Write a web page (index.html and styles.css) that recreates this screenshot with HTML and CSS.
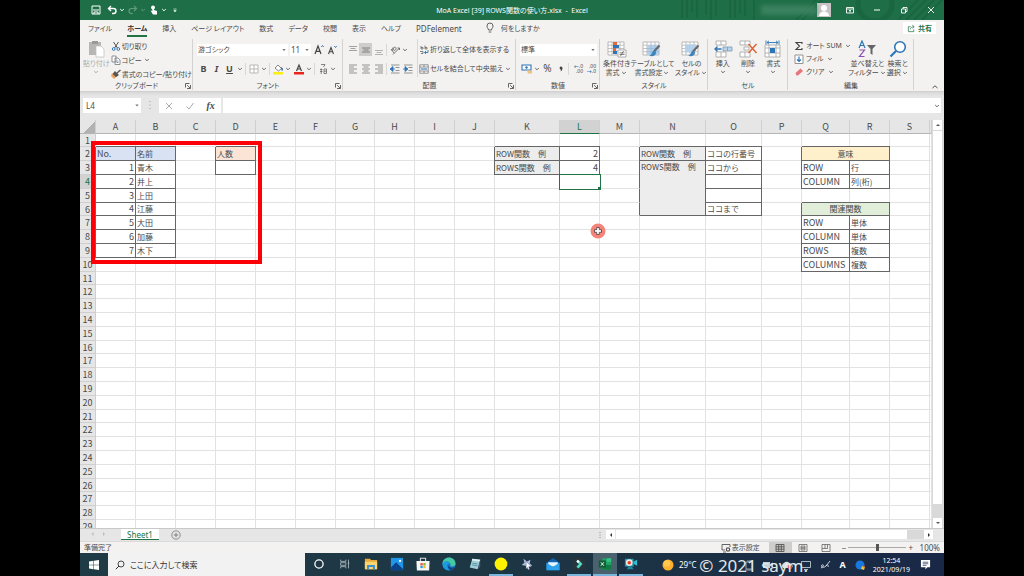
FILE: index.html
```html
<!DOCTYPE html>
<html lang="ja">
<head>
<meta charset="utf-8">
<title>MoA Excel [39] ROWS関数の使い方.xlsx - Excel</title>
<link rel="stylesheet" href="styles.css">
</head>
<body>
<svg class="defs" aria-hidden="true">
  <symbol id="chev" viewBox="0 0 8 8"><path d="M2.2 3l1.8 1.8L5.8 3" fill="none" stroke="#666" stroke-width="1"/></symbol>
  <symbol id="tri" viewBox="0 0 8 8"><path d="M2.3 3h3.4L4 5z" fill="#777"/></symbol>
  <symbol id="launch" viewBox="0 0 8 8"><path d="M1.5 5.5v-4h4M3.2 3.2l3 3M6.5 3v3.5H3" fill="none" stroke="#555" stroke-width=".9"/></symbol>
  <symbol id="table" viewBox="0 0 20 18"><path d="M1 2h16v13H1z" fill="#fff" stroke="#aaa" stroke-width=".8"/><path d="M1 5.200h16M1 8.500h16M1 11.700h16M5 2v13M9 2v13M13 2v13" stroke="#aaa" stroke-width=".7"/></symbol>
  <symbol id="brush" viewBox="0 0 20 18"><path d="M17.500 5.500l-5.500 6" stroke="#666" stroke-width="2"/><path d="M12.500 10.500c-3 0-1.500 4-5.500 5.200 3.500 1.300 7 0 7-3.500z" fill="#3d83bd"/></symbol>
</svg>
<main class="window">
  <header class="titlebar">
    <svg class="pattern" viewBox="0 0 264 20" aria-hidden="true"><g fill="none" stroke="#1a6542" stroke-width="2"><path d="M2 0v18M7 0v18M12 0v12M17 0v18M26 0v15M31 0v20M36 0v16M50 0v18M55 0v18M60 0v13M65 0v16M74 0v20"/><circle cx="195" cy="4" r="17" stroke-width="5"/><path d="M116 20l20-20M122 20l20-20M218 20l20-20M226 20l20-20M234 20l20-20M242 20l20-20"/></g></svg>
    <div class="quick">
      <button aria-label="上書き保存"><svg viewBox="0 0 10 10"><path d="M1 1h8v8H1z" fill="none" stroke="#fff"/><path d="M2 5h6M3 9V7h4v2" stroke="#fff" fill="none"/></svg></button>
      <button class="withchev" aria-label="元に戻す"><svg viewBox="0 0 10 10"><path d="M4 1L1.500 3.500 4 6M2 3.500h4.500a2.500 2.500 0 010 5H5" fill="none" stroke="#fff" stroke-width="1.400"/></svg><svg class="chev light"><use href="#chev"/></svg></button>
      <button class="withchev dim" aria-label="やり直し"><svg viewBox="0 0 10 10"><path d="M6 1l2.500 2.500L6 6M8 3.500H3.500a2.500 2.500 0 000 5H5" fill="none" stroke="#fff" stroke-width="1.200"/></svg><svg class="chev light"><use href="#chev"/></svg></button>
      <button class="withchev" aria-label="タッチ/マウス モード"><svg viewBox="0 0 10 10"><circle cx="4" cy="2.500" r="2" fill="#fff"/><path d="M3.300 2v4L1.500 5.500 4 9.500h4V6L5 5V2z" fill="#fff"/></svg><svg class="chev light"><use href="#chev"/></svg></button>
      <button aria-label="クイック アクセスのカスタマイズ"><svg viewBox="0 0 10 10"><path d="M3.500 4h3M3.800 5.500h2.400L5 7z" stroke="#dfeee6" stroke-width=".7" fill="#dfeee6"/></svg></button>
    </div>
    <h1 class="title">MoA Excel [39] ROWS関数の使い方.xlsx&nbsp; -&nbsp; Excel</h1>
    <div class="account">
      <span class="username"></span>
      <svg class="avatar" viewBox="0 0 14 14"><path d="M0 0h14v14H0z" fill="#c9c5c7"/><circle cx="7" cy="5" r="3" fill="#fff"/><path d="M2 13c0-6 10-6 10 0z" fill="#fff"/></svg>
      <button class="winbtn" aria-label="リボンの表示オプション"><svg viewBox="0 0 10 10"><path d="M1.500 2.500h7v5.500h-7zM1.500 4h7M5 7.500V5M4 6l1-1 1 1" fill="none" stroke="#fff" stroke-width=".9"/></svg></button>
      <button class="winbtn" aria-label="最小化"><svg viewBox="0 0 10 10"><path d="M2 5h6" stroke="#fff"/></svg></button>
      <button class="winbtn" aria-label="元に戻す (縮小)"><svg viewBox="0 0 10 10"><path d="M2.500 4h4v4h-4zM4 4V2.500h4V6.500H6.500" fill="none" stroke="#fff" stroke-width=".9"/></svg></button>
      <button class="winbtn" aria-label="閉じる"><svg viewBox="0 0 10 10"><path d="M2 2l6 6M8 2L2 8" stroke="#fff" stroke-width=".9"/></svg></button>
    </div>
  </header>

  <nav class="tabs">
    <button>ファイル</button><button class="active">ホーム</button><button>挿入</button><button>ページ レイアウト</button><button>数式</button><button>データ</button><button>校閲</button><button>表示</button><button>ヘルプ</button><button class="latin">PDFelement</button>
    <button class="tellme"><svg viewBox="0 0 10 12"><path d="M3.500 8C3.500 6.500 2 6 2 4a3 3 0 016 0c0 2-1.500 2.500-1.500 4zM3.700 10h2.600" fill="none" stroke="#555" stroke-width=".9"/></svg>何をしますか</button>
    <button class="share"><svg viewBox="0 0 10 10"><path d="M4 3H1.500v5.500h6V6M3.500 6c.5-2 2-3 4-3M6 1.300L8 3 6 4.700" fill="none" stroke="#217346" stroke-width=".8"/></svg>共有</button>
  </nav>

  <section class="ribbon">
    <div class="group">
      <div class="body clip">
        <button class="big paste"><svg viewBox="0 0 20 18"><path d="M3 2h12v13H3z" fill="#b9b5b7"/><path d="M6 1h6v3H6z" fill="#999"/><path d="M10 6h5l3 3v8h-8z" fill="#fff" stroke="#bbb" stroke-width=".7"/></svg><span>貼り付け</span><svg class="chev"><use href="#chev"/></svg></button>
        <div class="stack">
          <button class="row"><svg viewBox="0 0 10 10"><path d="M2.500 1l4 6M7.500 1l-4 6" stroke="#555" stroke-width="1"/><circle cx="2.700" cy="8" r="1.400" fill="none" stroke="#3477b8"/><circle cx="7.300" cy="8" r="1.400" fill="none" stroke="#3477b8"/></svg>切り取り</button>
          <button class="row"><svg viewBox="0 0 10 10"><path d="M1 1h4v6H1zM4 3h3l2 2v4.500H4z" fill="#fff" stroke="#777" stroke-width=".8"/><path d="M5.500 6h2M5.500 7.500h2" stroke="#3477b8" stroke-width=".7"/></svg>コピー<svg class="chev"><use href="#chev"/></svg></button>
          <button class="row"><svg viewBox="0 0 10 10"><path d="M1 4l4 4-2 2-3-3z" fill="#eaa25a"/><path d="M4 3l3 3-2 1.500L2.500 5zM6 4l3.500-3" stroke="#555" stroke-width="1.300" fill="#555"/></svg>書式のコピー/貼り付け</button>
        </div>
      </div>
      <div class="label">クリップボード<svg class="launch"><use href="#launch"/></svg></div>
    </div>

    <div class="group">
      <div class="body lines">
        <div class="line">
          <label class="combo name"><select aria-label="フォント"><option>游ゴシック</option></select><svg class="chev"><use href="#tri"/></svg></label>
          <label class="combo size"><select aria-label="フォント サイズ"><option>11</option></select><svg class="chev"><use href="#tri"/></svg></label>
          <button class="ib" aria-label="フォント サイズの拡大"><svg viewBox="0 0 12 12"><path d="M2 10l3-8 3 8M3 7.300h4" fill="none" stroke="#444" stroke-width="1.200"/><path d="M8.300 3L9.500 1.500 10.700 3" fill="none" stroke="#3477b8"/></svg></button>
          <button class="ib" aria-label="フォント サイズの縮小"><svg viewBox="0 0 12 12"><path d="M2.500 10L5 3.500 7.500 10M3.500 7.800h3" fill="none" stroke="#444" stroke-width="1.100"/><path d="M8.300 2l1.200 1.500L10.700 2" fill="none" stroke="#3477b8"/></svg></button>
        </div>
        <div class="line">
          <button class="ib b">B</button><button class="ib i">I</button><button class="ib u">U</button><svg class="chev"><use href="#chev"/></svg><i class="sep"></i>
          <button class="ib" aria-label="罫線"><svg viewBox="0 0 12 12"><path d="M2 2h8v8H2zM6 2v8M2 6h8" fill="#fff" stroke="#aaa" stroke-width=".8"/></svg></button><svg class="chev"><use href="#chev"/></svg><i class="sep"></i>
          <button class="ib" aria-label="塗りつぶしの色"><svg viewBox="0 0 12 12"><path d="M3 5l3-3 3.500 3.500L6.500 8z" fill="#fff" stroke="#777" stroke-width=".9"/><path d="M9.500 4.500c1.500 1 1 3 .5 3z" fill="#3477b8" stroke="#3477b8"/><path d="M1 9h10v2.500H1z" fill="#fbee12"/></svg></button><svg class="chev"><use href="#chev"/></svg>
          <button class="ib" aria-label="フォントの色"><svg viewBox="0 0 12 12"><path d="M3.500 8L6 2l2.500 6M4.300 6h3.400" fill="none" stroke="#444" stroke-width="1.200"/><path d="M1 9h10v2.500H1z" fill="#e8271c"/></svg></button><svg class="chev"><use href="#chev"/></svg><i class="sep"></i>
          <button class="ib" aria-label="ふりがなの表示"><svg viewBox="0 0 12 12"><path d="M4 1.500h4L6.500 4M3 6.500h2.500M4.200 5.500V11M3 8.500h2.500M7 6h2.500v4.500H7zM7 8.200h2.500" fill="none" stroke="#666" stroke-width=".8"/></svg></button><svg class="chev"><use href="#chev"/></svg>
        </div>
      </div>
      <div class="label">フォント<svg class="launch"><use href="#launch"/></svg></div>
    </div>

    <div class="group">
      <div class="body align">
        <div class="lines">
          <div class="line">
            <button class="ib" aria-label="上揃え"><svg viewBox="0 0 12 12"><path d="M2 2.500h8M3.500 4.500h5M2 6.500h8" stroke="#999" stroke-width=".9"/></svg></button>
            <button class="ib on" aria-label="上下中央揃え"><svg viewBox="0 0 12 12"><path d="M2 4h8M3.500 6h5M2 8h8" stroke="#777" stroke-width=".9"/></svg></button>
            <button class="ib" aria-label="下揃え"><svg viewBox="0 0 12 12"><path d="M2 6.500h8M3.500 8.500h5M2 10.500h8" stroke="#aaa" stroke-width=".9"/></svg></button><i class="sep"></i>
            <button class="ib" aria-label="方向"><svg viewBox="0 0 12 12"><path d="M2 5l3 4M4 3.500c-1 3 3 4 3 1S3 4 3 7M4 10.500L10.500 4M8.500 4h2v2" fill="none" stroke="#666" stroke-width=".9"/></svg></button><svg class="chev"><use href="#chev"/></svg>
          </div>
          <div class="line">
            <button class="ib" aria-label="左揃え"><svg viewBox="0 0 12 12"><path d="M2 2h8M2 4h5M2 6h8M2 8h5M2 10h8" stroke="#888" stroke-width=".9"/></svg></button>
            <button class="ib" aria-label="中央揃え"><svg viewBox="0 0 12 12"><path d="M2 2h8M3.500 4h5M2 6h8M3.500 8h5M2 10h8" stroke="#888" stroke-width=".9"/></svg></button>
            <button class="ib" aria-label="右揃え"><svg viewBox="0 0 12 12"><path d="M2 2h8M5 4h5M2 6h8M5 8h5M2 10h8" stroke="#888" stroke-width=".9"/></svg></button><i class="sep"></i>
            <button class="ib" aria-label="インデントを減らす"><svg viewBox="0 0 12 12"><path d="M2 2h8.500M6.500 4.500h4M6.500 7.500h4M2 10h8.500" stroke="#888" stroke-width=".9"/><path d="M4 3.500L1 6l3 2.500zM3 6h3" fill="#2e75b6" stroke="#2e75b6" stroke-width=".8"/></svg></button>
            <button class="ib" aria-label="インデントを増やす"><svg viewBox="0 0 12 12"><path d="M2 2h8.500M6.500 4.500h4M6.500 7.500h4M2 10h8.500" stroke="#888" stroke-width=".9"/><path d="M3 3.500L6 6 3 8.500zM1 6h3" fill="#2e75b6" stroke="#2e75b6" stroke-width=".8"/></svg></button>
          </div>
        </div>
        <i class="sep tall"></i>
        <div class="lines">
          <button class="line txt"><svg viewBox="0 0 10 10"><path d="M2 1v3h2V2.500H2M6 .5V4h2V2.500H6M1 6.500h3v2H2" fill="none" stroke="#666" stroke-width=".8"/><path d="M9 5v2.500H5.500M7 6L5.500 7.500 7 9" fill="none" stroke="#2e75b6" stroke-width=".9"/></svg>折り返して全体を表示する</button>
          <button class="line txt"><svg viewBox="0 0 10 10"><path d="M.8.8h8.400v8.400H.8zM.8 3h8.400M.8 7h8.400M5 .8V3M5 7v2" fill="#fff" stroke="#777" stroke-width=".8"/><path d="M2 5h6" stroke="#2e75b6" stroke-width="1.100"/></svg>セルを結合して中央揃え<svg class="chev"><use href="#chev"/></svg></button>
        </div>
      </div>
      <div class="label">配置<svg class="launch"><use href="#launch"/></svg></div>
    </div>

    <div class="group">
      <div class="body lines">
        <div class="line"><label class="combo fmt"><select aria-label="表示形式"><option>標準</option></select><svg class="chev"><use href="#tri"/></svg></label></div>
        <div class="line">
          <button class="ib" aria-label="通貨表示形式"><svg viewBox="0 0 12 12"><path d="M1 2h9v5H1z" fill="#fff" stroke="#2e75b6" stroke-width="1.100"/><circle cx="5.500" cy="4.500" r="1.200" fill="#2e75b6"/><path d="M6 7.500h5v3H7z" fill="#efc27b"/></svg></button><svg class="chev"><use href="#chev"/></svg>
          <button class="ib pct">%</button>
          <button class="ib" aria-label="桁区切りスタイル"><svg viewBox="0 0 12 12"><path d="M6 3.500a1.500 1.500 0 011.500 1.500C7.500 7 6.500 8 5.500 8.500 6 7.500 6 7 5.700 6.500 4 6 4.500 3.500 6 3.500z" fill="#444"/></svg></button><i class="sep"></i>
          <button class="ib dec" aria-label="小数点以下の表示桁数を増やす"><span><b>←</b>.0</span><span>.00</span></button>
          <button class="ib dec" aria-label="小数点以下の表示桁数を減らす"><span>.00</span><span><b>→</b>.0</span></button>
        </div>
      </div>
      <div class="label">数値<svg class="launch"><use href="#launch"/></svg></div>
    </div>

    <div class="group">
      <div class="body bigs styles">
        <button class="big"><svg viewBox="0 0 20 18"><use href="#table"/><path d="M6 2h4v3H6zM6 8h3v3H6z" fill="#e0693e"/><path d="M6 5h6v3H6zM6 11h4v3H6z" fill="#2e75b6"/><path d="M11 10h8v7h-8z" fill="#fff" stroke="#999" stroke-width=".8"/><path d="M12.500 12.800h5M12.500 14.500h5M13.500 16l3-5" stroke="#555" stroke-width=".7"/></svg><span>条件付き</span><span>書式<svg class="chev"><use href="#chev"/></svg></span></button>
        <button class="big"><svg viewBox="0 0 20 18"><use href="#table"/><path d="M5 5h12v10H5z" fill="#b5d0ea"/><path d="M5 8.500h12M5 11.700h12M9 5v10M13 5v10" stroke="#8db1d3" stroke-width=".6"/><use href="#brush"/></svg><span>テーブルとして</span><span>書式設定<svg class="chev"><use href="#chev"/></svg></span></button>
        <button class="big"><svg viewBox="0 0 20 18"><use href="#table"/><path d="M4 4.500h11v8H4z" fill="#b5d0ea"/><use href="#brush"/></svg><span>セルの</span><span>スタイル<svg class="chev"><use href="#chev"/></svg></span></button>
      </div>
      <div class="label">スタイル</div>
    </div>

    <div class="group">
      <div class="body bigs">
        <button class="big"><svg viewBox="0 0 20 18"><path d="M3 1h10v4H3zM8 1v4M3 12h10v5H3zM8 12v5" fill="#fff" stroke="#aaa" stroke-width=".9"/><path d="M10 7h9v4h-9zM14.500 7v4" fill="#bcd3ea" stroke="#7f9bb5" stroke-width=".8"/><path d="M8.500 9H2M4.500 6.500L2 9l2.500 2.500" fill="none" stroke="#2e75b6" stroke-width="1.300"/></svg><span>挿入</span><svg class="chev"><use href="#chev"/></svg></button>
        <button class="big"><svg viewBox="0 0 20 18"><path d="M2 1h10v4H2zM7 1v4M2 12h10v5H2zM7 12v5M6 7h5v3H6z" fill="#fff" stroke="#aaa" stroke-width=".9"/><path d="M10.500 4l8 9M18.500 4l-8 9" stroke="#e0602f" stroke-width="1.400"/></svg><span>削除</span><svg class="chev"><use href="#chev"/></svg></button>
        <button class="big"><svg viewBox="0 0 20 18"><path d="M2 5h15v12H2zM2 8h15M2 13h15M6 5v12M13 5v12" fill="#fff" stroke="#aaa" stroke-width=".9"/><path d="M7 8h5v5H7z" fill="#2e75b6"/><path d="M4 2.500h11M6 .8L4 2.500l2 1.700M13 .8l2 1.700-2 1.700M3 .5v4M16 .5v4" fill="none" stroke="#2e75b6" stroke-width=".9"/></svg><span>書式</span><svg class="chev"><use href="#chev"/></svg></button>
      </div>
      <div class="label">セル</div>
    </div>

    <div class="group">
      <div class="body edit">
        <div class="stack">
          <button class="row"><svg viewBox="0 0 10 10"><path d="M8 3V1.500H2L5.500 5 2 8.500h6V7" fill="none" stroke="#444" stroke-width="1.100"/></svg>オート SUM<svg class="chev"><use href="#chev"/></svg></button>
          <button class="row"><svg viewBox="0 0 10 10"><path d="M1 1h8v8.500H1z" fill="#fff" stroke="#888" stroke-width=".9"/><path d="M5 2.500v5M3 5.500l2 2 2-2" fill="none" stroke="#2e75b6" stroke-width="1.200"/></svg>フィル<svg class="chev"><use href="#chev"/></svg></button>
          <button class="row"><svg viewBox="0 0 10 10"><path d="M1.500 6l5-4.500L9 4 4 8.500H2.500z" fill="#e8747c"/></svg>クリア<svg class="chev"><use href="#chev"/></svg></button>
        </div>
        <button class="big"><svg viewBox="0 0 20 18"><path d="M2 8l3-7 3 7M3 5.500h4" fill="none" stroke="#2e75b6" stroke-width="1.200"/><path d="M2.500 10h5l-5 6.500h5" fill="none" stroke="#8f4fb0" stroke-width="1.200"/><path d="M10 5h9l-3.500 4v6l-2-1.500V9z" fill="#666"/></svg><span>並べ替えと</span><span>フィルター<svg class="chev"><use href="#chev"/></svg></span></button>
        <button class="big find"><svg viewBox="0 0 20 18"><circle cx="12" cy="7" r="5.300" fill="#fff" stroke="#2e75b6" stroke-width="1.600"/><path d="M8 11l-5.500 5.500" stroke="#2e75b6" stroke-width="2.200"/></svg><span>検索と</span><span>選択<svg class="chev"><use href="#chev"/></svg></span></button>
      </div>
      <div class="label">編集</div>
    </div>
    <div class="group fold"><button aria-label="リボンを折りたたむ"><svg viewBox="0 0 8 8"><path d="M1.500 5L4 2.800 6.500 5" fill="none" stroke="#555"/></svg></button></div>
  </section>

  <section class="formula">
    <input class="namebox" aria-label="名前ボックス" value="L4"><svg class="chev namearrow"><use href="#tri"/></svg>
    <svg class="grip" viewBox="0 0 4 10"><path d="M2 1v1M2 4.500v1M2 8v1" stroke="#999"/></svg>
    <div class="fx">
      <button aria-label="キャンセル"><svg viewBox="0 0 10 10"><path d="M2 2l6 6M8 2L2 8" stroke="#aaa" stroke-width="1"/></svg></button>
      <button aria-label="入力"><svg viewBox="0 0 10 10"><path d="M1.500 5.500L4 8l4.500-6" fill="none" stroke="#aaa"/></svg></button>
      <button class="fn">fx</button>
    </div>
    <div class="fbox"><input aria-label="数式バー"><svg class="chev"><use href="#chev"/></svg></div>
  </section>

  <section class="sheet">
    <div class="gridwrap">
      <table class="grid" id="grid"></table>
      <div class="redframe"></div>
      <svg class="pointer" viewBox="0 0 16 16"><circle cx="8" cy="8" r="7.500" fill="#f58379"/><path d="M6.700 4.500h2.600v2.200h2.200v2.600H9.300v2.200H6.700V9.300H4.500V6.700h2.200z" fill="#fff" stroke="#444" stroke-width=".8"/></svg>
    </div>
    <div class="vscroll"><button aria-label="上へ"><svg viewBox="0 0 8 8"><path d="M2 5h4L4 3z" fill="#555"/></svg></button><i class="thumb"></i><button aria-label="下へ"><svg viewBox="0 0 8 8"><path d="M2 3h4L4 5z" fill="#555"/></svg></button></div>
  </section>

  <section class="sheetbar">
    <div class="sheets"><span class="arrows"><svg viewBox="0 0 20 8"><path d="M4.500 2L2.500 4l2 2zM14 2l2 2-2 2z" fill="#bbb"/></svg></span><button class="sheettab">Sheet1</button><button class="add" aria-label="新しいシート"><svg viewBox="0 0 10 10"><circle cx="5" cy="5" r="4.200" fill="none" stroke="#777" stroke-width=".8"/><path d="M5 2.800v4.400M2.800 5h4.400" stroke="#777" stroke-width=".9"/></svg></button></div>
    <div class="hscroll"><svg class="grip" viewBox="0 0 4 10"><path d="M2 2v1M2 4.500v1M2 7v1" stroke="#888"/></svg><button aria-label="左へ"><svg viewBox="0 0 8 8"><path d="M5 2v4L3 4z" fill="#333"/></svg></button><i class="thumb"></i><button aria-label="右へ"><svg viewBox="0 0 8 8"><path d="M3 2v4l2-2z" fill="#333"/></svg></button></div>
  </section>

  <footer class="status">
    <span class="ready">準備完了</span>
    <button class="disp"><svg viewBox="0 0 10 10"><path d="M4 7H1V1.500h8V4M2 9h3" fill="none" stroke="#555" stroke-width=".9"/><circle cx="7" cy="6.500" r="1.700" fill="none" stroke="#555" stroke-width="1.200"/></svg>表示設定</button>
    <button class="view on" aria-label="標準"><svg viewBox="0 0 10 10"><path d="M1 1.500h8v7H1zM1 3.800h8M1 6.200h8M3.700 1.500v7M6.300 1.500v7" fill="none" stroke="#555" stroke-width=".9"/></svg></button>
    <button class="view" aria-label="ページ レイアウト"><svg viewBox="0 0 10 10"><path d="M1 1.500h8v7H1zM3 3h4v4H3zM3 4.400h4M3 5.700h4" fill="none" stroke="#666" stroke-width=".8"/></svg></button>
    <button class="view" aria-label="改ページ プレビュー"><svg viewBox="0 0 10 10"><path d="M1 1.500h8v7H1zM4 1.500v4M1 5.500h5.500v-4" fill="none" stroke="#666" stroke-width=".8"/></svg></button>
    <div class="zoom"><span>−</span><input type="range" aria-label="ズーム" value="50"><span>+</span></div>
    <span class="pctval">100%</span>
  </footer>

  <nav class="taskbar">
    <button class="start" aria-label="スタート"><svg viewBox="0 0 10 10"><path d="M0 1.500l4.500-.7v4H0zM5 .7L10 0v4.800H5zM0 5.300h4.500v4L0 8.600zM5 5.300h5V10l-5-.7z" fill="#fff"/></svg></button>
    <label class="search"><svg viewBox="0 0 10 10"><circle cx="6" cy="4" r="3" fill="none" stroke="#333" stroke-width=".9"/><path d="M4 6L.8 9.200" stroke="#333"/></svg><input type="text" placeholder="ここに入力して検索" aria-label="検索"></label>
    <div class="apps">
      <button aria-label="Cortana"><svg viewBox="0 0 16 16"><circle cx="8" cy="8" r="4.700" fill="none" stroke="#fff" stroke-width="1.500"/></svg></button>
      <button aria-label="タスク ビュー"><svg viewBox="0 0 16 16"><path d="M3 3v2h6V3M3 13v-2h6v2M3 6.500h6v3H3zM12 3v10M11 7h2" fill="none" stroke="#b8c3c8" stroke-width=".9"/></svg></button>
      <button aria-label="エクスプローラー"><svg viewBox="0 0 16 16"><path d="M1 2h6l1 1.500h7V14H1z" fill="#e9ac3a"/><path d="M1 5.500h14V14H1z" fill="#fbd56f"/><path d="M3.500 9h9v5h-2.300v-2.500H5.800V14H3.500z" fill="#3d8fd0"/></svg></button>
      <button aria-label="フォト"><svg viewBox="0 0 16 16"><path d="M1 1h14v14H1z" fill="#2196e8"/><path d="M1 12l6-6 8 8v1H1z" fill="#0c4287"/><circle cx="11.500" cy="4.500" r="1.300" fill="#fff"/></svg></button>
      <button aria-label="Microsoft Store"><svg viewBox="0 0 16 16"><path d="M5 5V1.500h6V5" fill="none" stroke="#ddd" stroke-width="1.200"/><path d="M.5 4.500h15l-.5 11H1z" fill="#f5f5f5"/><path d="M5 7h2.700v2.700H5z" fill="#ee4f2a"/><path d="M8.300 7H11v2.700H8.300z" fill="#7db61c"/><path d="M5 10.200h2.700v2.500H5z" fill="#20a1e8"/><path d="M8.300 10.200H11v2.500H8.300z" fill="#fbb816"/></svg></button>
      <button aria-label="Microsoft Edge"><svg viewBox="0 0 16 16"><circle cx="8" cy="8" r="7.500" fill="#1475cf"/><path d="M.5 8c0-10 15-10 15 0 0 3-4.500 3.500-6 2C11 7 7 4 .5 8z" fill="#46c9a0"/><path d="M.5 8c2.500-5 8.500-4 8.500-.5C5 7 5 12 9 15 4 16 .5 12 .5 8z" fill="#1d9bdf"/><path d="M7 9c0 3 4 4 7.500 2.500-1 1.700-2.700 3-5 3.500C7.500 13.500 6 11 7 9z" fill="#123f77"/></svg></button>
      <button aria-label="メモ帳"><svg viewBox="0 0 16 16"><path d="M5 2l9 1-3 11-9-2z" fill="#9fd0da"/><path d="M5 2l9 1-.6 2-9-1z" fill="#e4eff0"/><path d="M5 7l6 1M4.500 9l6 1" stroke="#3d7f90" stroke-width=".8"/><path d="M11 14l3-11v8z" fill="#557"/></svg></button>
      <button class="run" aria-label="黄色い円"><svg viewBox="0 0 16 16"><circle cx="8" cy="8" r="7.300" fill="#fff200"/></svg></button>
      <button aria-label="ポインター"><svg viewBox="0 0 16 16"><path d="M4 2l4 3 4-2-1 4 3 3-4 .5L8 14l-1.500-4L2 9l3-2.500z" fill="#aebfe8"/><path d="M7 5l6 6H10l1 3-1.500.5L8.500 12 7 13.500z" fill="#fff" stroke="#47506f" stroke-width=".5"/></svg></button>
      <button aria-label="メール"><svg viewBox="0 0 16 16"><path d="M.5 6.500L8 1l7.500 5.500V15H.5z" fill="#0f66b7"/><path d="M2.500 6h11v5h-11z" fill="#e9f4fc"/><path d="M.5 6.500L8 11l7.500-4.500V15H.5z" fill="#2ea3ec"/></svg></button>
      <button class="run" aria-label="Filmora"><svg viewBox="0 0 16 16"><path d="M1 1h14v14H1z" fill="#28333a"/><path d="M5 5l2.500-2L12 8l-4.500 5L5 11l3-3z" fill="#4ed8c5"/><path d="M5 5l1.500-2 2 2L7 7z" fill="#fff"/></svg></button>
      <button class="run cur" aria-label="Excel"><svg viewBox="0 0 16 16"><path d="M5 1.500h10v13H5z" fill="#21a366"/><path d="M10 1.500h5v4h-5z" fill="#33c481"/><path d="M5 9h10v5.500H5z" fill="#107c41"/><path d="M1 4h8v8H1z" fill="#0c5c35"/><path d="M3.300 6l3.400 4M6.700 6l-3.400 4" stroke="#fff" stroke-width="1.100"/></svg></button>
      <button class="run" aria-label="録画"><svg viewBox="0 0 16 16"><path d="M1 2h10v9H1z" fill="#2796ad"/><path d="M11 5l4-2v7l-4-2z" fill="#36bcd2"/><circle cx="6" cy="6.500" r="3.800" fill="#f2e8e4"/><circle cx="6" cy="6.500" r="2" fill="#e53a22"/><path d="M3 14h8l-2-3H5z" fill="#2087a2"/></svg></button>
    </div>
    <div class="tray">
      <svg class="sun" viewBox="0 0 12 12"><circle cx="6" cy="6" r="5.500" fill="#ffb02e"/><circle cx="5" cy="4.500" r="3.300" fill="#ffc84f"/></svg>
      <span class="temp">29°C</span>
      <div class="trayicons">
        <svg viewBox="0 0 12 12"><path d="M3 3h6v7H3zM2 11h8M4 2h4" fill="none" stroke="#9fb0bb" stroke-width=".9"/></svg>
        <svg viewBox="0 0 12 12"><path d="M1 3h7v6H1zM8 5l3-1.500v5L8 7z" fill="#c7d2d8"/></svg>
        <svg viewBox="0 0 12 12"><path d="M2 9a3 3 0 011-5 3.500 3.500 0 016 1 2 2 0 011 4z" fill="#dbe2e6"/><circle cx="9" cy="8" r="2.300" fill="#e2413a"/></svg>
        <svg viewBox="0 0 12 12"><path d="M1.500 2.500h9v6h-9zM4 10.500h4" fill="none" stroke="#b8c6d0" stroke-width=".9"/></svg>
        <svg viewBox="0 0 12 12"><path d="M2 9c3-1 3-4 1-3s1 4 4 1l4-5M7 7c1-2 3-1 2 1" fill="none" stroke="#dfe6ea" stroke-width=".9"/></svg>
      </div>
      <span class="ime">A</span>
      <svg class="ball" viewBox="0 0 12 12"><circle cx="6" cy="6" r="4.500" fill="#1778e0"/><path d="M8 7l3 1-1 3-3-1z" fill="#f3c431"/><path d="M9 6l2 1-1 2z" fill="#e2413a"/></svg>
      <div class="clock"><span>12:54</span><span>2021/09/19</span></div>
      <svg class="note" viewBox="0 0 12 12"><path d="M1 1h10v8H8l-2 2.500V9H1z" fill="#fff"/><path d="M3 3.500h6M3 5.200h6M3 7h4" stroke="#24395a" stroke-width=".8"/></svg>
    </div>
    <span class="watermark">© 2021 saym.</span>
  </nav>
</main>
<script src="app.js"></script>
</body>
</html>
```

FILE: styles.css
```css
* { box-sizing: border-box; }
body {
  margin: 0;
  padding: 0 80px;
  background: #000;
  font-family: "Noto Sans", "Noto Sans CJK JP", sans-serif;
  font-size: 7px;
  line-height: 9px;
  color: #4a4a4a;
  font-feature-settings: "palt";
}
button, input, select {
  font: inherit;
  font-feature-settings: inherit;
  color: inherit;
  border: 0;
  margin: 0;
  padding: 0;
  background: none;
  outline: none;
  border-radius: 0;
  white-space: nowrap;
}
button { display: flex; align-items: center; justify-content: center; }
svg { display: block; flex: none; }
.defs { position: absolute; width: 0; height: 0; }
.chev { width: 8px; height: 8px; }
.light { filter: brightness(3); }
.window { display: flex; flex-direction: column; min-height: 100vh; background: #e6e6e6; }

/* title bar */
.titlebar {
  position: relative;
  display: grid;
  grid-template-columns: 1fr auto 1fr;
  align-items: center;
  height: 20px;
  background: #1e6e48;
  color: #fff;
}
.pattern { position: absolute; right: 0; top: 0; height: 20px; width: 264px; }
.quick { display: flex; align-items: center; padding-left: 11px; gap: 5px; }
.quick svg { width: 10px; height: 10px; }
.quick .chev { width: 8px; height: 8px; }
.quick .withchev { gap: 1px; margin-right: -3px; }
.quick button:first-child { margin-right: 1px; }
.dim { opacity: .3; }
.title { position: relative; margin: 0; font-size: 7px; font-weight: 400; white-space: nowrap; }
.account { position: relative; display: flex; align-items: center; justify-content: flex-end; }
.username { width: 56px; height: 10px; background: #478a69; filter: blur(2px); opacity: .7; }
.avatar { width: 14px; height: 14px; margin-right: 5px; }
.winbtn { width: 27px; height: 20px; }
.winbtn svg { width: 10px; height: 10px; }

/* ribbon tabs */
.tabs { display: flex; align-items: stretch; height: 17px; padding: 0 8px; gap: 15px; background: #f3f2f1; }
.tabs button { border-bottom: 2px solid transparent; padding-top: 1px; }
.tabs .active { border-color: #217346; font-weight: 700; color: #333; }
.tabs .latin { font-size: 8px; }
.tabs .tellme { margin-left: 8px; gap: 6px; }
.tellme svg { width: 10px; height: 12px; }
.tabs .share { margin: 2px 0 3px auto; padding: 0 4px; gap: 2px; background: #fff; border: 0; color: #217346; font-weight: 700; }
.share svg { width: 9px; height: 9px; }

/* ribbon */
.ribbon {
  display: grid;
  grid-template-columns: 113fr 150fr 173fr 84fr 108fr 80fr 126fr 30fr;
  height: 55px;
  background: #f3f2f1;
  border-bottom: 1px solid #d0d0d0;
}
.group { position: relative; display: flex; flex-direction: column; min-width: 0; }
.group:not(:last-child) { background: linear-gradient(#d4d2d0, #d4d2d0) right 2px / 1px 51px no-repeat; }
.body { flex: 1; display: flex; padding: 2px 3px 0 4px; min-width: 0; }
.label { position: relative; height: 10px; text-align: center; }
.launch { position: absolute; right: 1px; top: 1px; width: 8px; height: 8px; }
.stack { display: flex; flex-direction: column; }
.row { height: 14px; justify-content: flex-start; gap: 1px; }
.row > svg:first-child { width: 10px; height: 10px; }
.body.clip { padding-left: 3px; gap: 1px; }
.big { flex-direction: column; justify-content: flex-start; padding-top: 1px; }
.big > svg:first-child { width: 20px; height: 18px; margin-bottom: 1px; }
.big span { display: flex; align-items: center; }
.paste { width: 27px; color: #aaa; }
.paste .chev { opacity: .5; }
.lines { display: flex; flex-direction: column; justify-content: flex-start; gap: 4px; padding-top: 3px; }
.body.lines { padding-top: 5px; }
.line { display: flex; align-items: center; height: 15px; }
.ib { width: 13px; height: 13px; }
.ib svg { width: 12px; height: 12px; }
.b, .i, .u { font-size: 9px; font-weight: 700; }
.i { font-style: italic; }
.u { text-decoration: underline; }
.on { background: #cfcdcb; }
.sep { width: 1px; height: 12px; margin: 0 1px; background: #dad8d6; }
.sep.tall { height: 38px; margin: 2px 1px 0; }
.combo { display: grid; align-items: center; height: 12px; background: #fff; }
.combo > * { grid-area: 1 / 1; }
.combo svg { justify-self: end; pointer-events: none; }
.combo select { width: 100%; appearance: none; padding-left: 1px; }
.combo.name { width: 91px; }
.combo.size { width: 21px; margin: 0 1px 0 2px; }
.combo.size select { font-size: 8px; }
.combo.fmt { flex: 1; }
.align { padding: 0 0 0 3px; }
.align .lines { padding-top: 5px; }
.align .lines:first-child { width: 70px; }
.txt { gap: 1px; }
.txt > svg:first-child { width: 10px; height: 10px; }
button.txt { justify-content: flex-start; }
.pct { font-size: 10px; }
.dec { flex-direction: column; font-size: 5px; line-height: 5px; align-items: flex-end; }
.dec b { color: #2e75b6; }
.bigs { padding: 2px 2px 0; justify-content: space-around; }
.body.styles { padding: 2px 0 0 3px; justify-content: space-between; }
.edit { gap: 0; padding-left: 6px; }
.edit .stack { width: 54px; }
.edit .row { height: 13px; gap: 2px; }
.fold { justify-content: flex-end; align-items: center; padding-left: 12px; }
.fold svg { width: 8px; height: 8px; }

/* formula bar */
.formula { display: flex; align-items: stretch; height: 28px; padding: 6px 3px 7px; background: linear-gradient(#d8d8d8, #e6e6e6 4px); }
.namebox { width: 50px; padding-left: 3px; background: #fff; font-size: 8px; }
.namearrow { background: #fff; height: 15px; padding: 3px 0; }
.formula .grip { width: 4px; height: 10px; margin: 2px 7px; }
.fx { display: flex; background: #fff; width: 62px; }
.fx button { flex: 1; }
.fx svg { width: 10px; height: 10px; }
.fx .fn { font: italic 700 10px "Liberation Serif", serif; }
.fbox { display: flex; flex: 1; align-items: center; margin-left: 2px; background: #fff; }
.fbox input { flex: 1; }

/* worksheet */
.sheet { display: flex; flex: 1; height: 408px; min-height: 0; }
.gridwrap { position: relative; flex: 1; min-width: 0; height: 408px; overflow: hidden; background: #fff; }
.grid { width: 100%; table-layout: fixed; border-collapse: separate; border-spacing: 0; font: 8px/12px "Noto Sans CJK JP", sans-serif; font-feature-settings: normal; color: #4a4a4a; }
.grid tr { height: 14px; }
.grid tbody tr:nth-child(5n+1) { height: 13px; }
.grid th, .grid td { padding: 0 1px; border-right: 1px solid #e2e2e2; border-bottom: 1px solid #e2e2e2; white-space: nowrap; text-align: left; overflow: hidden; }
.grid th { background: #e6e6e6; border-right-color: #cfcfcf; border-bottom-color: #cfcfcf; font-size: 9px; line-height: 11px; font-weight: 400; text-align: center; padding: 0; }
.grid thead th { border-bottom-color: #b5b5b5; }
.grid th.corner { background: linear-gradient(135deg, #e6e6e6 58%, #b2b2b2 58%); }
.grid th.sel { background: #d2d2d2; color: #217346; }
.grid thead th.sel { border-bottom: 1px solid #217346; }
.grid .rsel { background: #d2d2d2; color: #217346; border-right-color: #217346; }
.grid td.en { font-size: 9px; line-height: 12px; }
.grid td.num { text-align: right; font-size: 9px; line-height: 12px; }
.grid td.mid { text-align: center; }
.grid td.box { border-color: #666; box-shadow: -1px 0 #666, 0 -1px #666; }
.grid td.edge { border-right-color: #666; }
.grid td.top { vertical-align: top; }
.blue { background: #d9e2f3; }
.orange { background: #fbe4d6; }
.gray { background: #ededed; }
.yellow { background: #fff0cc; }
.green { background: #e1eeda; }
.grid td.cursor { outline: 1px solid #217346; border-color: #217346; border-width: 0; background: linear-gradient(#217346, #217346) right bottom / 2px 2px no-repeat; }
.redframe { position: absolute; left: 11px; top: 21px; width: 171px; height: 123px; border: 4px solid #fb0007; }
.pointer { position: absolute; left: 510px; top: 103px; width: 16px; height: 16px; }
.vscroll { display: flex; flex-direction: column; width: 12px; padding: 0 2px 0 1px; background: #d9d9d9; }
.vscroll button { height: 10px; background: #fff; }
.vscroll .thumb { flex: 1; margin: 1px 0 14px; background: #fff; }
.vscroll svg, .hscroll button svg { width: 8px; height: 8px; }

/* sheet tabs */
.sheetbar { display: flex; justify-content: space-between; height: 13px; border-top: 1px solid #c8c8c8; background: #e6e6e6; }
.sheets { display: flex; align-items: flex-start; }
.arrows { width: 41px; padding: 1px 0 0 9px; }
.arrows svg { width: 20px; height: 8px; }
.sheettab { width: 38px; height: 11px; background: #fff; border-bottom: 1px solid #217346; color: #217346; font-size: 8px; }
.add { margin: 1px 0 0 12px; }
.add svg { width: 10px; height: 10px; }
.hscroll { display: flex; width: 40%; padding: 1px 11px 2px 0; }
.hscroll .grip { width: 4px; height: 10px; margin-right: 4px; }
.hscroll button { width: 9px; background: #fff; }
.hscroll .thumb { flex: 1; margin: 0 0 0 1px; background: #fff; border-right: 17px solid #d9d9d9; }

/* status bar */
.status { display: flex; align-items: stretch; height: 12px; background: #f3f2f1; border-top: 1px solid #dadada; }
.ready { flex: 1; padding: 1px 4px; }
.disp { gap: 1px; margin-right: 9px; }
.disp svg, .view svg { width: 10px; height: 10px; }
.view { width: 23px; }
.zoom { display: flex; align-items: center; gap: 2px; margin-left: 4px; font-size: 8px; }
.zoom input { width: 58px; height: 9px; appearance: none; background: linear-gradient(#aaa, #aaa) center / 100% 1px no-repeat; }
.zoom input::-webkit-slider-thumb { appearance: none; width: 3px; height: 7px; background: #555; }
.pctval { width: 31px; padding: 1px 4px 0 0; text-align: right; font-size: 8px; }

/* taskbar */
.taskbar { position: relative; display: flex; align-items: stretch; height: 23px; background: linear-gradient(90deg, #1f3b46, #1d3644 50%, #192846); color: #fff; }
.start { width: 28px; }
.start svg { width: 10px; height: 10px; }
.search { display: flex; align-items: center; flex: 0 1 197px; padding-left: 7px; gap: 5px; background: #f2f2f2; color: #333; font-size: 8px; }
.search svg { width: 10px; height: 10px; }
.search input { flex: 1; min-width: 0; }
.search input::placeholder { color: #333; opacity: 1; }
.apps { display: flex; padding-left: 2px; gap: 2px; }
.apps button { width: 24px; border-bottom: 2px solid transparent; padding-top: 1px; }
.apps svg { width: 14px; height: 14px; }
.apps .run { border-color: #79b5dc; }
.apps .cur { background: #4a626e; }
.tray { display: flex; flex: 1; align-items: center; justify-content: flex-end; padding-right: 13px; }
.sun { width: 12px; height: 12px; margin-right: 5px; }
.temp { flex: 1; font-size: 8px; }
.tray .sun { margin-left: 19px; }
.trayicons { display: flex; gap: 7px; }
.trayicons svg, .ball { width: 12px; height: 12px; }
.ime { margin: 0 8px 0 9px; font-size: 9px; font-weight: 700; }
.clock { display: flex; flex-direction: column; align-items: center; margin: 0 10px 0 7px; }
.note { width: 11px; height: 11px; }
.watermark { position: absolute; right: 136px; top: 2px; font-size: 17px; line-height: 22px; color: #e4e8ea; white-space: nowrap; }
```

FILE: app.js
```js
const widths = [16, 40, 40, 40, 40, 40, 40, 39, 40, 40, 40, 65, 40, 40, 66, 56, 40, 48, 40, 40];
const letters = "ABCDEFGHIJKLMNOPQRS".split("");
const ROWS = 29;

// address: [text, classes, colspan, rowspan]
const cells = {
  A2: ["No.", "box blue en"], B2: ["名前", "box blue"], D2: ["人数", "box orange"], D3: ["", "box"],
  K2: ["ROW関数　例", "box gray"], L2: ["2", "box num"],
  K3: ["ROWS関数　例", "box gray"], L3: ["4", "box num"],
  L4: ["", "cursor"],
  M3: ["", "edge"], M4: ["", "edge"], M5: ["", "edge"], M6: ["", "edge"],
  N2: ["ROW関数　例", "box gray"], O2: ["ココの行番号", "box"],
  N3: ["ROWS関数　例", "box gray top", 1, 4], O3: ["ココから", "box"],
  O4: ["", "box"], O5: ["", "box"], O6: ["ココまで", "box"],
  Q2: ["意味", "box yellow mid", 2, 1], Q3: ["ROW", "box en"], R3: ["行", "box"],
  Q4: ["COLUMN", "box en"], R4: ["列(桁)", "box"],
  Q6: ["関連関数", "box green mid", 2, 1], Q7: ["ROW", "box en"], R7: ["単体", "box"],
  Q8: ["COLUMN", "box en"], R8: ["単体", "box"],
  Q9: ["ROWS", "box en"], R9: ["複数", "box"],
  Q10: ["COLUMNS", "box en"], R10: ["複数", "box"]
};
["青木", "井上", "上田", "江藤", "大田", "加藤", "木下"].forEach((name, i) => {
  cells["A" + (i + 3)] = [String(i + 1), "box num"];
  cells["B" + (i + 3)] = [name, "box"];
});
const covered = new Set(["R2", "R6", "N4", "N5", "N6"]);

let html = "<colgroup>" + widths.map(w => `<col style="width:${w}px">`).join("") + "<col></colgroup>";
html += '<thead><tr><th class="corner"></th>' +
  letters.map(l => `<th class="${l === "L" ? "sel" : ""}">${l}</th>`).join("") + "<th></th></tr></thead><tbody>";
for (let r = 1; r <= ROWS; r++) {
  html += `<tr><th class="${r === 4 ? "rsel" : ""}">${r}</th>`;
  for (const l of letters) {
    const id = l + r;
    if (covered.has(id)) continue;
    const [text, cls, cs, rs] = cells[id] || ["", ""];
    html += `<td class="${cls}" colspan="${cs || 1}" rowspan="${rs || 1}">${text}</td>`;
  }
  html += "<td></td></tr>";
}
document.getElementById("grid").innerHTML = html + "</tbody>";
```
